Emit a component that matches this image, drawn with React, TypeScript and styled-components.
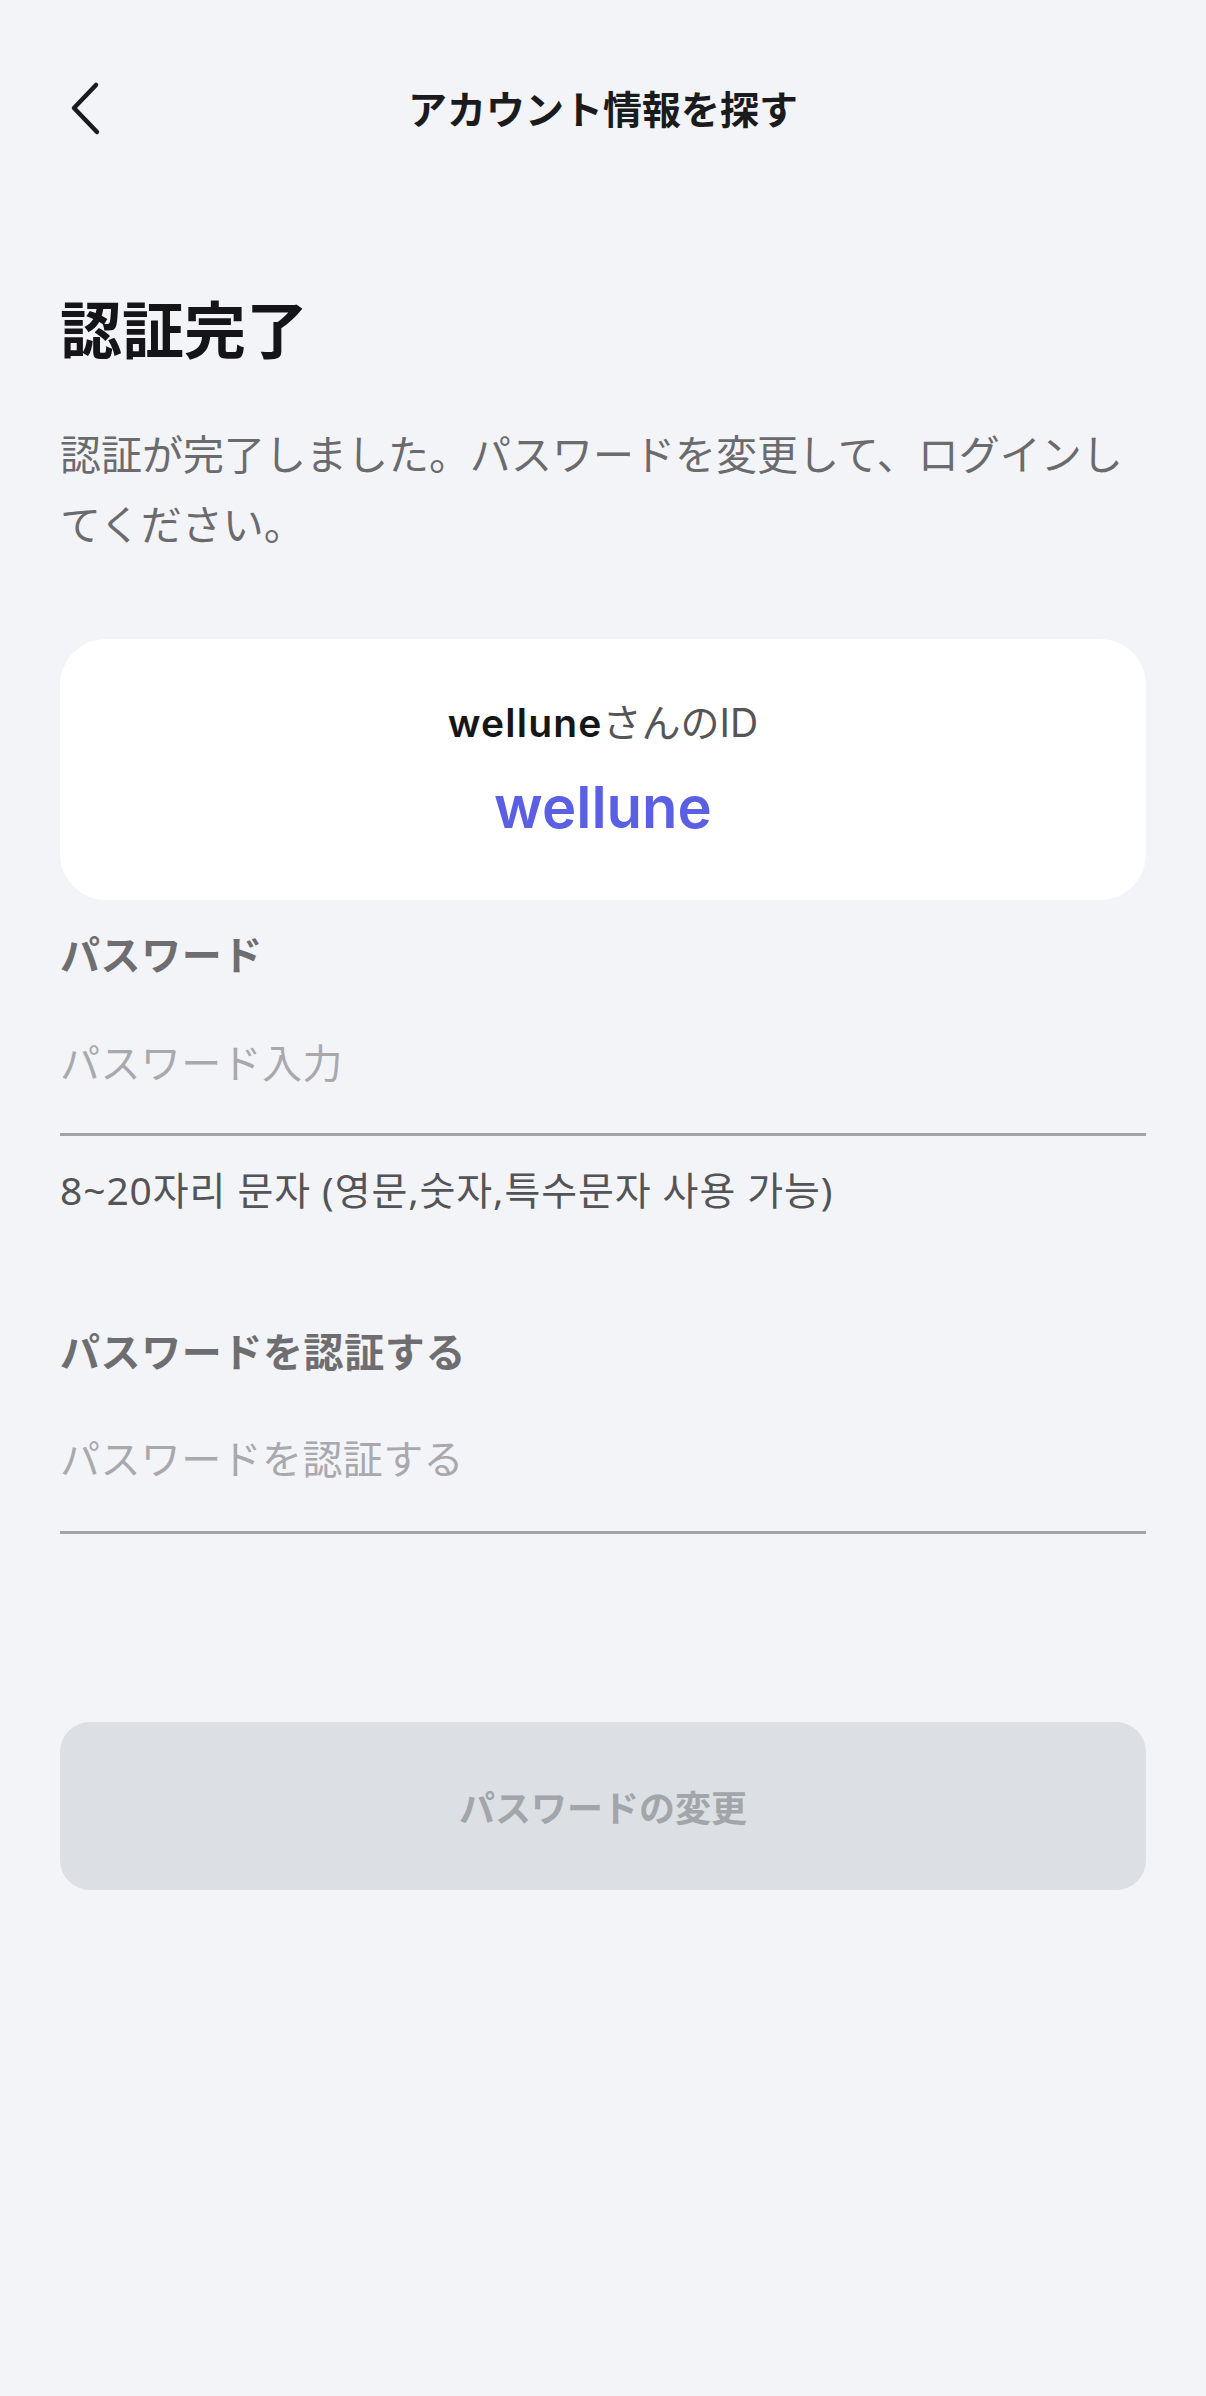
import React from "react";
import styled, { createGlobalStyle } from "styled-components";

const GlobalStyle = createGlobalStyle`
  html, body {
    margin: 0;
    padding: 0;
    background: #f3f4f8;
  }
  body {
    font-family: "Inter", "Noto Sans CJK JP", "Noto Sans CJK KR", sans-serif;
  }
  * { box-sizing: border-box; }
`;

const Page = styled.div`
  min-height: 2396px;
  background: #f3f4f8;
  display: flex;
  flex-direction: column;
`;

const Header = styled.header`
  position: relative;
  height: 214px;
  display: flex;
  align-items: center;
  justify-content: center;
`;

const BackButton = styled.button`
  position: absolute;
  left: 56px;
  top: 72px;
  width: 64px;
  height: 72px;
  padding: 0;
  border: none;
  background: transparent;
  display: flex;
  align-items: center;
  justify-content: center;
  cursor: pointer;
`;

const HeaderTitle = styled.h1`
  margin: 0;
  font-size: 39px;
  line-height: 52px;
  font-weight: 700;
  color: #1b1b1d;
  font-family: "Noto Sans CJK JP", sans-serif;
`;

const Content = styled.main`
  padding: 0 60px;
  display: flex;
  flex-direction: column;
`;

const Heading = styled.h2`
  margin: 70px 0 0;
  font-size: 62px;
  line-height: 87px;
  font-weight: 700;
  color: #151517;
  font-family: "Noto Sans CJK JP", sans-serif;
`;

const Description = styled.p`
  margin: 46px 0 0;
  font-size: 41px;
  line-height: 70px;
  font-weight: 400;
  color: #6b6b6e;
  font-family: "Noto Sans CJK JP", sans-serif;
`;

const IdCard = styled.section`
  margin-top: 82px;
  height: 261px;
  background: #ffffff;
  border-radius: 46px;
  display: flex;
  flex-direction: column;
  align-items: center;
  justify-content: center;
  gap: 22px;
`;

const IdCaption = styled.div`
  font-size: 39px;
  line-height: 52px;
  color: #555558;
  font-family: "Inter", "Noto Sans CJK JP", sans-serif;
`;

const IdName = styled.span`
  font-weight: 600;
  color: #161618;
  letter-spacing: 1.2px;
`;

const IdValue = styled.div`
  font-size: 58px;
  line-height: 72px;
  font-weight: 600;
  color: #5a5fe3;
  font-family: "Inter", sans-serif;
`;

const Field = styled.div<{ $top: number }>`
  margin-top: ${(p) => p.$top}px;
  display: flex;
  flex-direction: column;
`;

const Label = styled.label`
  font-size: 40px;
  line-height: 52px;
  font-weight: 700;
  letter-spacing: 0.6px;
  color: #6e6e71;
  font-family: "Noto Sans CJK JP", sans-serif;
`;

const Input = styled.input<{ $lift: number; $gap: number }>`
  margin-top: ${(p) => p.$gap}px;
  height: 142px;
  width: 100%;
  border: none;
  border-bottom: 3px solid #a3a3a6;
  background: transparent;
  padding: 0 0 ${(p) => p.$lift}px;
  font-size: 40px;
  letter-spacing: 0.4px;
  color: #1b1b1d;
  outline: none;
  font-family: "Noto Sans CJK JP", sans-serif;

  &::placeholder {
    color: #a9a9ad;
  }
`;

const Hint = styled.p`
  margin: 28px 0 0;
  font-size: 39px;
  line-height: 52px;
  letter-spacing: 0.9px;
  color: #545457;
  font-family: "Noto Sans", "Noto Sans CJK KR", sans-serif;
`;

const SubmitButton = styled.button`
  margin-top: 188px;
  height: 168px;
  width: 100%;
  border: none;
  border-radius: 30px;
  background: #dcdfe3;
  color: #a2a5aa;
  font-size: 36px;
  font-weight: 700;
  font-family: "Noto Sans CJK JP", sans-serif;
  cursor: default;
`;

const ChevronLeft = () => (
  <svg width="40" height="64" viewBox="0 0 40 64" fill="none">
    <path
      d="M28 9 L6 32 L29 56"
      stroke="#1b1b1d"
      strokeWidth="4.5"
      strokeLinecap="round"
      strokeLinejoin="round"
    />
  </svg>
);

export default function App() {
  return (
    <>
      <GlobalStyle />
      <Page>
        <Header>
          <BackButton aria-label="戻る">
            <ChevronLeft />
          </BackButton>
          <HeaderTitle>アカウント情報を探す</HeaderTitle>
        </Header>
        <Content>
          <Heading>認証完了</Heading>
          <Description>
            認証が完了しました。パスワードを変更して、ログインしてください。
          </Description>
          <IdCard>
            <IdCaption>
              <IdName>wellune</IdName>さんのID
            </IdCaption>
            <IdValue>wellune</IdValue>
          </IdCard>
          <Field $top={27}>
            <Label>パスワード</Label>
            <Input
              type="password"
              placeholder="パスワード入力"
              $gap={15}
              $lift={6}
            />
            <Hint>8~20자리 문자 (영문,숫자,특수문자 사용 가능)</Hint>
          </Field>
          <Field $top={108}>
            <Label>パスワードを認証する</Label>
            <Input
              type="password"
              placeholder="パスワードを認証する"
              $gap={16}
              $lift={10}
            />
          </Field>
          <SubmitButton disabled>パスワードの変更</SubmitButton>
        </Content>
      </Page>
    </>
  );
}
